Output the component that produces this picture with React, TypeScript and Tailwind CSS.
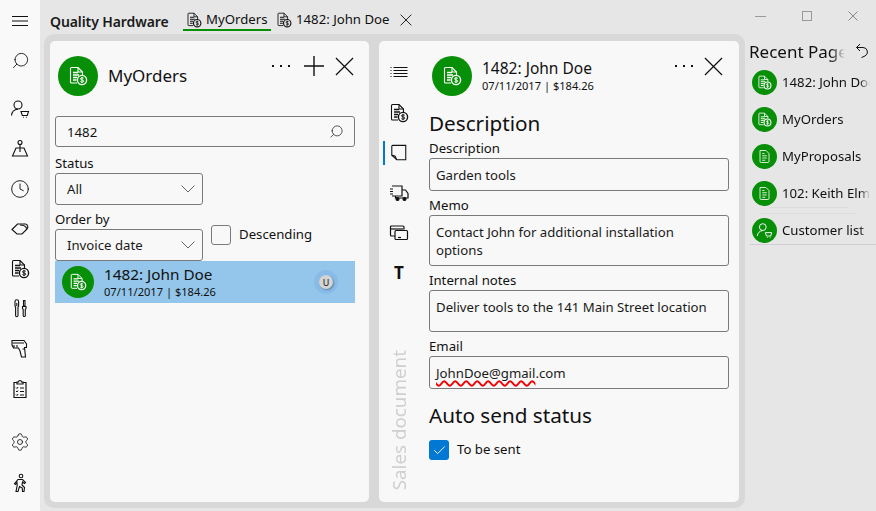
import React from "react";
import { Search, Clock, Settings, Check } from "lucide-react";

type P = { className?: string };

const DocDollar = ({ className = "w-5 h-5", color = "#111" }: P & { color?: string }) => (
  <svg viewBox="0 0 20 20" className={className} fill="none" stroke={color} strokeWidth="1.1">
    <path d="M9 17H3.5a1 1 0 0 1-1-1V2.5a1 1 0 0 1 1-1H10l4.5 4.5V9" />
    <path d="M10 1.5V6h4.5" />
    <path d="M5 6.5h5M5 9h6M5 11.5h4M5 14h3.5" strokeWidth="1.3" />
    <circle cx="14" cy="14" r="4.6" strokeWidth="1.4" />
    <path d="M15.7 12.3c-.6-.7-3.2-.8-3.2.6 0 1.5 3.3.7 3.3 2.2 0 1.3-2.6 1.3-3.4.5M14 10.9v6.2" strokeWidth="1" />
  </svg>
);

const DocList = ({ className = "w-5 h-5", color = "#fff" }: P & { color?: string }) => (
  <svg viewBox="0 0 20 20" className={className} fill="none" stroke={color} strokeWidth="1.1">
    <path d="M4 2h8l4 4v10.5a1.5 1.5 0 0 1-1.5 1.5H5.5A1.5 1.5 0 0 1 4 16.5z" />
    <path d="M7 6h3M7 9h6M7 12h6M7 15h4" />
  </svg>
);

const UserCart = ({ className = "w-5 h-5", color = "#111" }: P & { color?: string }) => (
  <svg viewBox="0 0 20 20" className={className} fill="none" stroke={color} strokeWidth="1.1">
    <circle cx="8" cy="6" r="4" />
    <path d="M1.5 16.5c.3-3.5 2.6-6 6.5-6.5" />
    <path d="M11 12.5h7.5l-1.2 4H12.3zM13 18.2h.8M16.2 18.2h.8" />
  </svg>
);

const Pin = ({ className = "w-5 h-5" }: P) => (
  <svg viewBox="0 0 20 20" className={className} fill="none" stroke="#111" strokeWidth="1.1">
    <circle cx="10" cy="3.5" r="2" />
    <path d="M10 5.5V13M6 9h8l3.5 8h-15z" />
  </svg>
);

const Tag = ({ className = "w-5 h-5" }: P) => (
  <svg viewBox="0 0 20 20" className={className} fill="none" stroke="#111" strokeWidth="1.1">
    <path d="M2 10.5 7.5 5h8a3 3 0 0 1 1.5 5l-5 5H7z" />
    <path d="M10 6c3.5 0 6 1.5 6.800 3.800" />
  </svg>
);

const Tools = ({ className = "w-5 h-5" }: P) => (
  <svg viewBox="0 0 20 20" className={className} fill="none" stroke="#111" strokeWidth="1.1">
    <path d="M5 2.500a1.800 1.800 0 0 1 3.600 0V7l-.6 1v8.500a1.200 1.200 0 0 1-2.400 0V8L5 7z" />
    <path d="M6.800 4v3" />
    <path d="M13.500 1.500h1.500V7h-1.500zM12.500 7.500h3.500v2l-.7 1v6a1 1 0 0 1-2.100 0v-6l-.7-1z" />
  </svg>
);

const Scanner = ({ className = "w-5 h-5" }: P) => (
  <svg viewBox="0 0 20 20" className={className} fill="none" stroke="#111" strokeWidth="1.1">
    <path d="M2 1.500h12l2.500 3.500v3.500h-2l1 9.500h-4l-1.500-6-1.500-3H3.500L2 6z" />
    <path d="M2.500 4h11.500M4 8.500V6M7 8.500V6M12.500 10h2" />
  </svg>
);

const Clipboard = ({ className = "w-5 h-5" }: P) => (
  <svg viewBox="0 0 20 20" className={className} fill="none" stroke="#111" strokeWidth="1.2">
    <path d="M7 3.500H4v15h12v-15h-3" />
    <path d="M7 5V3h1.500a1.500 1.500 0 0 1 3 0H13v2z" />
    <path d="M6 8.500l1 1 1-1.500M6 12l1 1 1-1.500M6 15.500l1 1 1-1.500M10 9h4M10 12.500h4M10 16h4" strokeWidth="1" />
  </svg>
);

const Runner = ({ className = "w-5 h-5" }: P) => (
  <svg viewBox="0 0 20 20" className={className} fill="none" stroke="#111" strokeWidth="1.1">
    <circle cx="11" cy="3" r="1.800" />
    <path d="M8 6.500h4.500l3 3-1 1-2-1.500-.5 3 2.500 2.500-.5 4h-1.500l-.2-3.500L9.500 13.500 8 18.500H6l1.200-6L7 9.500l-1.500 2-1-.8z" />
  </svg>
);

const MenuLines = () => (
  <svg viewBox="0 0 16 10" className="w-[16px] h-[10px]" fill="none" stroke="#111" strokeWidth="1">
    <path d="M0 .5h16M0 5h16M0 9.500h16" />
  </svg>
);

const ListLines = ({ className = "w-5 h-5" }: P) => (
  <svg viewBox="0 0 20 20" className={className} fill="none" stroke="#111" strokeWidth="1">
    <path d="M4.500 4.500h14M4.500 7.500h14M4.500 10.500h14M4.500 13.500h14M1.500 4.500h1M1.500 7.500h1M1.500 10.500h1M1.500 13.500h1" />
  </svg>
);

const Note = ({ className = "w-5 h-5" }: P) => (
  <svg viewBox="0 0 20 20" className={className} fill="none" stroke="#111" strokeWidth="1.2">
    <path d="M3 1.500h14.500v16H7.500L2 12.500V2.500a1 1 0 0 1 1-1z" />
    <path d="M2 12.500c2 .2 3.500.5 4 1.500s.8 2.500 1.500 3.500" />
  </svg>
);

const Truck = ({ className = "w-5 h-5" }: P) => (
  <svg viewBox="0 0 20 20" className={className} fill="none" stroke="#111" strokeWidth="1.2">
    <path d="M3 3h10v10H3M1 6h3M1 8.500h3M1 11h3" />
    <path d="M13 7h3.500L19 10.500V15H6.500v-2" />
    <circle cx="8.500" cy="16" r="1.500" fill="#111" />
    <circle cx="15.500" cy="16" r="1.500" fill="#111" />
  </svg>
);

const Cards = ({ className = "w-5 h-5" }: P) => (
  <svg viewBox="0 0 20 20" className={className} fill="none" stroke="#111" strokeWidth="1.2">
    <path d="M6 13H2.500a1 1 0 0 1-1-1V4a1 1 0 0 1 1-1H14a1 1 0 0 1 1 1v2.500" />
    <path d="M1.500 6h13" />
    <rect x="6" y="7.500" width="12.500" height="9" rx="1" />
    <path d="M9 14.500h3" />
  </svg>
);

const Dots = () => (
  <svg viewBox="0 0 18 2" className="w-[18px] h-[2px]" fill="#111">
    <rect x="0" width="2" height="2" />
    <rect x="8" width="2" height="2" />
    <rect x="16" width="2" height="2" />
  </svg>
);
const PlusBig = () => (
  <svg viewBox="0 0 20 20" className="w-[20px] h-[20px]" fill="none" stroke="#111" strokeWidth="1.4">
    <path d="M0 10h20M10 0v20" />
  </svg>
);
const Cross = ({ className = "w-[19px] h-[19px]", w = 1.3, color = "#111" }: P & { w?: number; color?: string }) => (
  <svg viewBox="0 0 20 20" className={className} fill="none" stroke={color} strokeWidth={w}>
    <path d="M1 1l18 18M19 1 1 19" />
  </svg>
);
const Chevron = () => (
  <svg viewBox="0 0 14 8" className="w-[14px] h-[8px]" fill="none" stroke="#666" strokeWidth="1">
    <path d="M.5.500 7 7 13.500.500" />
  </svg>
);
const UndoHook = () => (
  <svg viewBox="0 0 14 15" className="w-[14px] h-[15px]" fill="none" stroke="#111" strokeWidth="1">
    <path d="M1.500 4.500H8a4.500 4.500 0 0 1 2 8.500l-3.500 1.500" />
    <path d="M5 1 1.500 4.500 5 8" />
  </svg>
);

const Avatar = ({ size, children }: { size: string; children: React.ReactNode }) => (
  <div className={`${size} shrink-0 rounded-full bg-[#078f07] flex items-center justify-center`}>{children}</div>
);

const Field = ({ label, h, children }: { label: string; h: string; children: React.ReactNode }) => (
  <div className="flex flex-col">
    <label className="text-[13.2px] leading-[18px] text-[#111] mb-[1px]">{label}</label>
    <div className={`${h} border border-[#7a7a7a] rounded-[3px] px-[6px] pt-[7px] text-[13.2px] leading-[18px] text-[#1a1a1a]`}>{children}</div>
  </div>
);

const Combo = ({ value }: { value: string }) => (
  <div className="w-[148px] h-[32px] border border-[#7a7a7a] rounded-[3px] flex items-center justify-between pl-[11px] pr-[7px] text-[13.2px] text-[#1a1a1a]">
    <span className="mt-[2px]">{value}</span>
    <Chevron />
  </div>
);

const sideTop = [
  <UserCart key="u" />,
  <Pin key="p" />,
  <Clock key="c" className="w-[20px] h-[20px]" strokeWidth={1.1} />,
  <Tag key="t" />,
  <DocDollar key="d" />,
  <Tools key="to" />,
  <Scanner key="sc" />,
  <Clipboard key="cl" />,
];

const recent = [
  { name: "1482: John Doe", icon: "dollar" },
  { name: "MyOrders", icon: "dollar" },
  { name: "MyProposals", icon: "list" },
  { name: "102: Keith Elmer", icon: "list" },
  { name: "Customer list", icon: "user" },
];

const railIcons = [
  <ListLines key="l" />,
  <DocDollar key="d" />,
  <Note key="n" className="w-[18px] h-[18px]" />,
  <Truck key="tr" />,
  <Cards key="ca" />,
  <span key="t" className="text-[17px] font-bold leading-[20px]">T</span>,
];

export default function App() {
  return (
    <div className="w-[876px] h-[511px] flex overflow-hidden bg-[#e6e6e6] text-[#111] font-['Open_Sans',sans-serif]">
      {/* Side navigation */}
      <nav className="w-[40px] shrink-0 bg-[#f9f9f9] flex flex-col items-center pt-[11px]">
        <div className="h-[20px] flex items-center"><MenuLines /></div>
        <div className="mt-[19px] h-[20px] w-[20px] flex items-center justify-center">
          <Search className="w-[19px] h-[19px] -scale-x-100" strokeWidth={1.1} />
        </div>
        <div className="mt-[29px] flex flex-col items-center gap-[20px]">
          {sideTop.map((ic, i) => (
            <div key={i} className="h-[20px] w-[20px] flex items-center justify-center">{ic}</div>
          ))}
        </div>
        <div className="mt-[33px] h-[20px] flex items-center">
          <Settings className="w-[20px] h-[20px]" strokeWidth={1} />
        </div>
        <div className="mt-[21px]"><Runner /></div>
      </nav>

      <div className="flex-1 flex flex-col min-w-0">
        {/* Title bar */}
        <header className="h-[34px] shrink-0 flex items-center pl-[10px]">
          <span className="mt-[8px] text-[14px] font-semibold w-[133px] text-[#1a1a1a] tracking-[-0.1px]">Quality Hardware</span>
          <div className="h-[34px] w-[88px] flex items-center gap-[4px] pl-[3px] pt-[6px] relative">
            <DocDollar className="w-[16px] h-[16px]" />
            <span className="text-[13.2px]">MyOrders</span>
            <div className="absolute left-0 right-0 bottom-[3px] h-[2px] bg-[#078f07]" />
          </div>
          <div className="flex items-center gap-[4px] ml-[5px] mt-[6px]">
            <DocDollar className="w-[16px] h-[16px]" />
            <span className="text-[13.2px] w-[100px] whitespace-nowrap">1482: John Doe</span>
            <Cross className="w-[12px] h-[12px]" w={1.5} />
          </div>
          <div className="ml-auto flex items-center gap-[36px] pr-[18px] -mt-[2px]">
            <div className="w-[11px] h-px bg-[#999]" />
            <div className="w-[10px] h-[10px] border border-[#999]" />
            <Cross className="w-[10px] h-[10px]" w={2} color="#8a8a8a" />
          </div>
        </header>

        <div className="flex-1 flex min-h-0">
          {/* Panels */}
          <div className="ml-[4px] mb-[3px] w-[701px] h-[474px] bg-[#d8d8d8] rounded-[10px] flex gap-[10px] pl-[6px] pr-[6px] pt-[7px] pb-[6px]">
            {/* Orders panel */}
            <section className="w-[319px] bg-[#f8f8f8] rounded-[5px] flex flex-col pt-[15px] pl-[5px] pr-[14px]">
              <div className="flex items-start pl-[3px]">
                <Avatar size="w-[40px] h-[40px]"><DocDollar className="w-[20px] h-[20px]" color="#fff" /></Avatar>
                <span className="ml-[10px] mt-[7px] text-[17px] leading-[26px]">MyOrders</span>
                <div className="ml-auto flex items-center h-[20px] pr-[1px]">
                  <Dots />
                  <div className="ml-[14px]"><PlusBig /></div>
                  <div className="ml-[11px]"><Cross /></div>
                </div>
              </div>
              <div className="mt-[20px] h-[31px] border border-[#7a7a7a] rounded-[3px] flex items-center justify-between pl-[11px] pr-[10px] text-[13.2px]">
                <span className="mt-[2px]">1482</span>
                <Search className="w-[15px] h-[15px] -scale-x-100" strokeWidth={1.1} />
              </div>
              <label className="mt-[7px] text-[13.2px] leading-[18px]">Status</label>
              <div className="mt-[1px]"><Combo value="All" /></div>
              <label className="mt-[5px] text-[13.2px] leading-[18px]">Order by</label>
              <div className="mt-[1px] flex items-start">
                <Combo value="Invoice date" />
                <div className="ml-[8px] -mt-[4px] flex items-center gap-[8px]">
                  <div className="w-[20px] h-[20px] border border-[#7a7a7a] rounded-[3px]" />
                  <span className="text-[13.2px]">Descending</span>
                </div>
              </div>
              <div className="h-[42px] bg-[#93c6ea] flex items-center pl-[7px] pr-[17px]">
                <Avatar size="w-[32px] h-[32px]"><DocDollar className="w-[18px] h-[18px]" color="#fff" /></Avatar>
                <div className="ml-[10px] flex flex-col -mt-[1px]">
                  <span className="text-[15.3px] leading-[19px]">1482: John Doe</span>
                  <span className="text-[11.1px] leading-[14px] mt-[1px]">07/11/2017 | $184.26</span>
                </div>
                <div className="ml-auto w-[24px] h-[24px] rounded-full bg-[#88bce8] flex items-center justify-center">
                  <div className="w-[14px] h-[14px] rounded-full bg-[#d4d4d4] shadow-[1px_1px_2px_rgba(0,0,0,0.3)] flex items-center justify-center text-[9px] leading-none">U</div>
                </div>
              </div>
            </section>

            {/* Details panel */}
            <section className="w-[360px] bg-[#f8f8f8] rounded-[5px] flex">
              <div className="w-[40px] shrink-0 flex flex-col items-center pt-[22px] pb-[12px] relative">
                <div className="flex flex-col items-center gap-[20px]">
                  {railIcons.map((ic, i) => (
                    <div key={i} className="w-[20px] h-[20px] flex items-center justify-center">{ic}</div>
                  ))}
                </div>
                <div className="absolute left-[4px] top-[100px] w-[2px] h-[24px] bg-[#0078d4]" />
                <span className="mt-auto text-[18.8px] leading-[24px] text-[#cfcfcf] [writing-mode:vertical-rl] rotate-180">Sales document</span>
              </div>
              <div className="flex-1 pl-[10px] pr-[10px] pt-[15px] flex flex-col">
                <div className="flex items-start pl-[3px]">
                  <Avatar size="w-[40px] h-[40px]"><DocDollar className="w-[20px] h-[20px]" color="#fff" /></Avatar>
                  <div className="ml-[10px] flex flex-col">
                    <span className="text-[15.5px] leading-[20px] mt-[2px]">1482: John Doe</span>
                    <span className="text-[11.1px] leading-[14px] mt-[1px]">07/11/2017 | $184.26</span>
                  </div>
                  <div className="ml-auto flex items-center h-[20px] pr-[6px]">
                    <Dots />
                    <div className="ml-[11px]"><Cross /></div>
                  </div>
                </div>
                <h2 className="mt-[12px] mb-[1px] text-[20.7px] leading-[30px] font-normal">Description</h2>
                <div className="flex flex-col gap-[5px]">
                  <Field label="Description" h="h-[33px]">Garden tools</Field>
                  <Field label="Memo" h="h-[51px]">Contact John for additional installation options</Field>
                  <Field label="Internal notes" h="h-[42px]">Deliver tools to the 141 Main Street location</Field>
                  <Field label="Email" h="h-[33px]">
                    <span className="underline decoration-wavy decoration-[#f00000] decoration-[1.5px] underline-offset-[2px] [text-decoration-skip-ink:none]">JohnDoe@gmail</span>.com
                  </Field>
                </div>
                <h2 className="mt-[11px] text-[20.7px] leading-[30px] font-normal">Auto send status</h2>
                <div className="mt-[10px] flex items-center gap-[8px]">
                  <div className="w-[20px] h-[20px] rounded-[3px] bg-[#0078d4] flex items-center justify-center">
                    <Check className="w-[15px] h-[15px] text-white" strokeWidth={1.5} />
                  </div>
                  <span className="text-[13.2px]">To be sent</span>
                </div>
              </div>
            </section>
          </div>

          {/* Recent pages */}
          <aside className="flex-1 min-w-0 ml-[4px] overflow-hidden relative">
            <div className="flex items-center h-[36px]">
              <span className="w-[96px] whitespace-nowrap overflow-hidden text-[17px] leading-[36px] [mask-image:linear-gradient(to_right,black_85%,transparent)]">Recent Pages</span>
              <div className="ml-[10px] -mt-[4px]"><UndoHook /></div>
            </div>
            <ul className="-mt-[6px] flex flex-col pl-[3px]">
              {recent.map((r, i) => (
                <li key={i} className="h-[37px] flex items-center gap-[5px] whitespace-nowrap">
                  <Avatar size="w-[25px] h-[25px]">
                    {r.icon === "dollar" && <DocDollar className="w-[15px] h-[15px]" color="#fff" />}
                    {r.icon === "list" && <DocList className="w-[15px] h-[15px]" />}
                    {r.icon === "user" && <UserCart className="w-[17px] h-[17px]" color="#fff" />}
                  </Avatar>
                  <span className="text-[13.2px] w-[88px] overflow-hidden [mask-image:linear-gradient(to_right,black_88%,transparent)]">{r.name}</span>
                </li>
              ))}
            </ul>
            <div className="absolute left-[1px] right-0 top-[210px] h-px bg-[#d0d0d0]" />
            <div className="absolute left-[20px] w-[80px] top-[173px] h-px bg-[#dcdcdc]" />
            <div className="absolute left-[12px] w-[95px] top-[179px] h-px bg-[#dcdcdc]" />
          </aside>
        </div>
      </div>
    </div>
  );
}
